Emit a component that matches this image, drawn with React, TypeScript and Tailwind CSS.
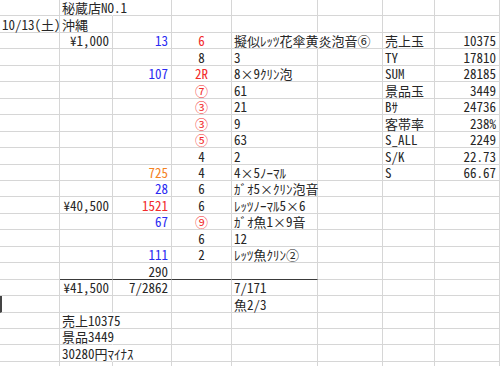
type Cell = {
  t?: string
  c?: 'blue' | 'red' | 'orange'
  a?: 'l' | 'r' | 'c'
  open?: boolean
  thick?: boolean
  edge?: boolean
}

const widths = [60, 53, 59, 60, 86, 65, 52, 65]
const heights = [16, 17, 16, 17, 16, 17, 16, 17, 16, 17, 16, 16, 17, 16, 17, 16, 17, 16, 17, 16, 16, 17, 10]

const colors = {
  blue: 'text-[#2b2bf2]',
  red: 'text-[#f22b2b]',
  orange: 'text-[#f5821f]',
}

// row -> column -> cell
const rows: Record<number, Cell>[] = [
  { 1: { t: '秘蔵店NO.1', open: true } },
  { 0: { t: '10/13(土)' }, 1: { t: '沖縄' } },
  {
    1: { t: '¥1,000', a: 'r' },
    2: { t: '13', c: 'blue', a: 'r' },
    3: { t: '6', c: 'red', a: 'c' },
    4: { t: '擬似ﾚｯﾂ花傘黄炎泡音⑥', open: true },
    6: { t: '売上玉' },
    7: { t: '10375', a: 'r' },
  },
  { 3: { t: '8', a: 'c' }, 4: { t: '3' }, 6: { t: 'TY' }, 7: { t: '17810', a: 'r' } },
  {
    2: { t: '107', c: 'blue', a: 'r' },
    3: { t: '2R', c: 'red', a: 'c' },
    4: { t: '8×9ｸﾘﾝ泡' },
    6: { t: 'SUM' },
    7: { t: '28185', a: 'r' },
  },
  { 3: { t: '⑦', c: 'red', a: 'c' }, 4: { t: '61' }, 6: { t: '景品玉' }, 7: { t: '3449', a: 'r' } },
  { 3: { t: '③', c: 'red', a: 'c' }, 4: { t: '21' }, 6: { t: 'Bｻ' }, 7: { t: '24736', a: 'r' } },
  { 3: { t: '③', c: 'red', a: 'c' }, 4: { t: '9' }, 6: { t: '客帯率' }, 7: { t: '238%', a: 'r' } },
  { 3: { t: '⑤', c: 'red', a: 'c' }, 4: { t: '63' }, 6: { t: 'S_ALL' }, 7: { t: '2249', a: 'r' } },
  { 3: { t: '4', a: 'c' }, 4: { t: '2' }, 6: { t: 'S/K' }, 7: { t: '22.73', a: 'r' } },
  {
    2: { t: '725', c: 'orange', a: 'r' },
    3: { t: '4', a: 'c' },
    4: { t: '4×5ﾉｰﾏﾙ' },
    6: { t: 'S' },
    7: { t: '66.67', a: 'r' },
  },
  { 2: { t: '28', c: 'blue', a: 'r' }, 3: { t: '6', a: 'c' }, 4: { t: 'ｶﾞｵ5×ｸﾘﾝ泡音' } },
  {
    1: { t: '¥40,500', a: 'r' },
    2: { t: '1521', c: 'red', a: 'r' },
    3: { t: '6', a: 'c' },
    4: { t: 'ﾚｯﾂﾉｰﾏﾙ5×6' },
  },
  { 2: { t: '67', c: 'blue', a: 'r' }, 3: { t: '⑨', c: 'red', a: 'c' }, 4: { t: 'ｶﾞｵ魚1×9音' } },
  { 3: { t: '6', a: 'c' }, 4: { t: '12' } },
  { 2: { t: '111', c: 'blue', a: 'r' }, 3: { t: '2', a: 'c' }, 4: { t: 'ﾚｯﾂ魚ｸﾘﾝ②' } },
  {
    1: { thick: true },
    2: { t: '290', a: 'r', thick: true },
    3: { thick: true },
    4: { thick: true },
  },
  { 1: { t: '¥41,500', a: 'r' }, 2: { t: '7/2862', a: 'r' }, 4: { t: '7/171' } },
  { 0: { edge: true }, 4: { t: '魚2/3' } },
  { 1: { t: '売上10375', open: true } },
  { 1: { t: '景品3449', open: true } },
  { 1: { t: '30280円ﾏｲﾅｽ', open: true } },
  {},
]

function SheetCell({ cell, w, h }: { cell?: Cell; w: number; h: number }) {
  const align = cell?.a === 'r' ? 'justify-end pr-[3px]' : cell?.a === 'c' ? 'justify-center' : 'justify-start pl-[2px]'
  return (
    <div
      className={`relative flex shrink-0 items-end overflow-visible whitespace-nowrap border-b ${
        cell?.thick ? 'border-b-[#3a3a3a]' : 'border-b-[#d6d6d6]'
      } ${cell?.open ? 'border-r border-r-transparent' : 'border-r border-r-[#d6d6d6]'} ${
        cell?.edge ? 'border-l-2 border-l-[#444]' : ''
      } ${align}`}
      style={{ width: w, height: h }}
    >
      {cell?.t && (
        <span className={`relative z-10 leading-[15px] ${cell.c ? colors[cell.c] : 'text-[#262626]'}`}>{cell.t}</span>
      )}
    </div>
  )
}

export default function App() {
  return (
    <div
      className="h-[366px] w-[500px] overflow-hidden bg-white text-[13px] [font-family:'Noto_Sans_CJK_JP',sans-serif] [font-feature-settings:'hwid']"
    >
      {rows.map((row, r) => (
        <div key={r} className="flex">
          {widths.map((w, c) => (
            <SheetCell key={c} cell={row[c]} w={w} h={heights[r]} />
          ))}
        </div>
      ))}
    </div>
  )
}
